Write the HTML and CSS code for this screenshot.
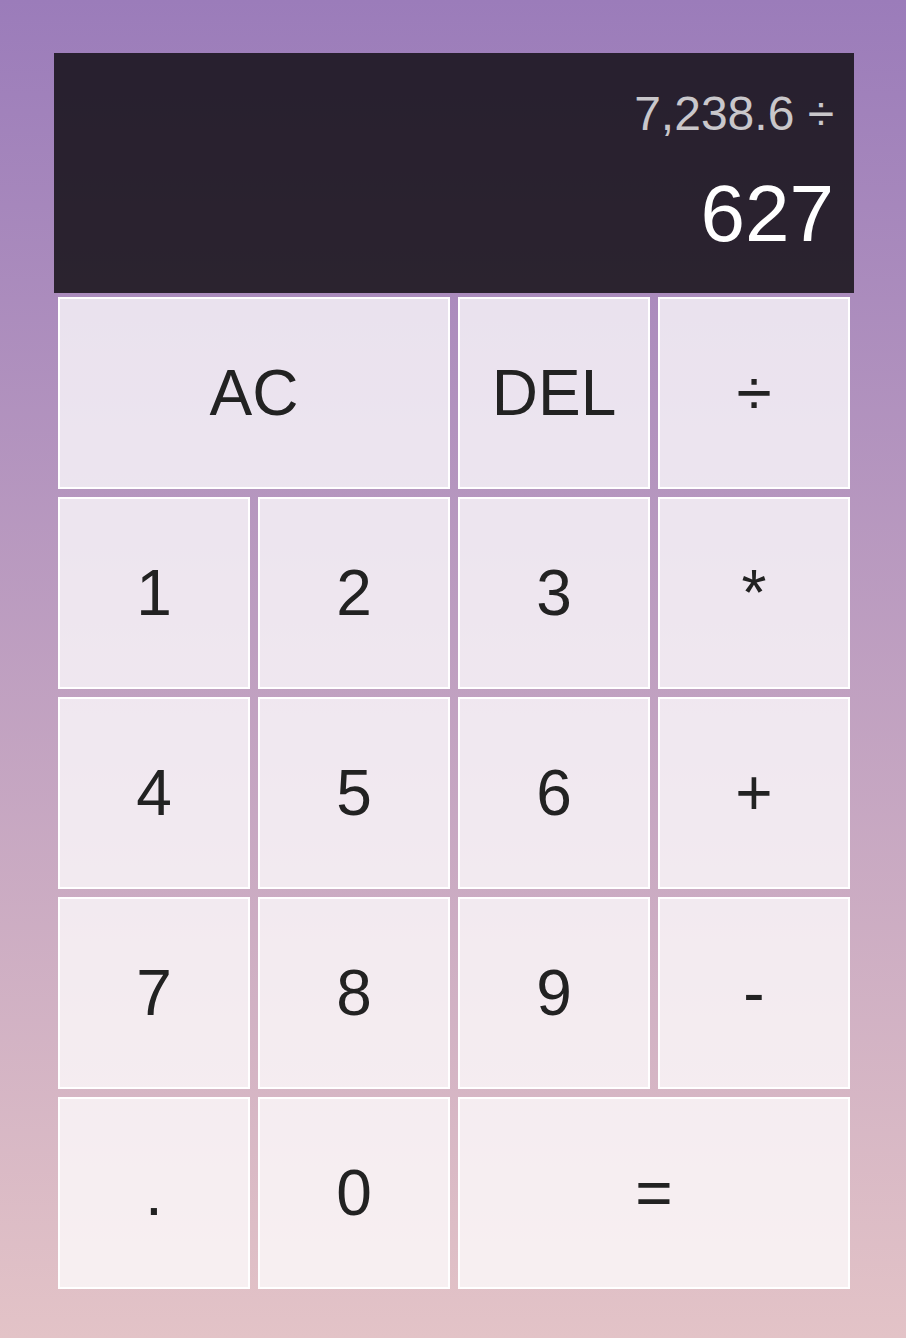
FILE: index.html
```html
<!DOCTYPE html>
<html lang="en">
<head>
<meta charset="utf-8">
<title>Calculator</title>
<link rel="stylesheet" href="styles.css">
</head>
<body>
<div class="calculator">
  <div class="output">
    <div class="previous">7,238.6 ÷</div>
    <div class="current">627</div>
  </div>
  <button class="span-two">AC</button>
  <button>DEL</button>
  <button>÷</button>
  <button>1</button>
  <button>2</button>
  <button>3</button>
  <button>*</button>
  <button>4</button>
  <button>5</button>
  <button>6</button>
  <button>+</button>
  <button>7</button>
  <button>8</button>
  <button>9</button>
  <button>-</button>
  <button>.</button>
  <button>0</button>
  <button class="span-two">=</button>
</div>
</body>
</html>
```
FILE: styles.css
```css
*, *::before, *::after {
  box-sizing: border-box;
  font-family: "Liberation Sans", Arial, sans-serif;
  font-weight: normal;
}

html, body {
  margin: 0;
  padding: 0;
}

body {
  min-height: 100vh;
  background: linear-gradient(to bottom, #9b7cba, #e3c3c7);
}

.calculator {
  display: grid;
  grid-template-columns: repeat(4, 200px);
  grid-template-rows: minmax(240px, auto) repeat(5, 200px);
  width: 800px;
  margin: 0 0 0 54px;
  padding-top: 53px;
  padding-bottom: 45px;
}

.calculator > button {
  margin: 4px;
  cursor: pointer;
  font-size: 64px;
  color: #222;
  border: 2px solid #fff;
  outline: none;
  background-color: rgba(255, 255, 255, 0.75);
  padding: 0;
}

.span-two {
  grid-column: span 2;
}

.output {
  grid-column: 1 / -1;
  background-color: rgba(0, 0, 0, 0.75);
  display: flex;
  flex-direction: column;
  align-items: flex-end;
  justify-content: space-around;
  padding: 20px;
  word-wrap: break-word;
  word-break: break-all;
}

.previous {
  color: rgba(255, 255, 255, 0.75);
  font-size: 48px;
}

.current {
  color: #fff;
  font-size: 80px;
}
```
